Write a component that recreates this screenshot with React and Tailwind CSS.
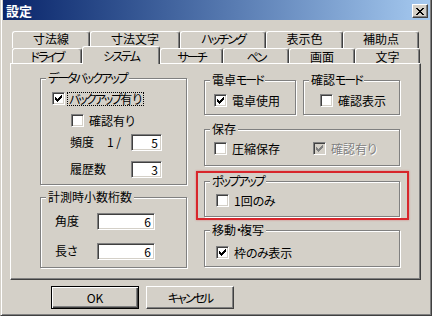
import React from 'react';

function J({ children }) {
  const s = String(children);
  const parts = [];
  let cur = '';
  let type = null;
  for (const ch of s) {
    const c = ch.codePointAt(0);
    const t = c >= 0x30a0 && c <= 0x30ff ? 'k' : c >= 0x3040 && c <= 0x309f ? 'h' : 'o';
    if (t !== type && cur) {
      parts.push([type, cur]);
      cur = '';
    }
    type = t;
    cur += ch;
  }
  if (cur) parts.push([type, cur]);
  return parts.map(([t, p], i) =>
    t === 'k' ? (
      <span key={i} className="tracking-[-2px]">{p}</span>
    ) : t === 'h' ? (
      <span key={i} className="tracking-[-0.5px]">{p}</span>
    ) : (
      <React.Fragment key={i}>{p}</React.Fragment>
    )
  );
}

function Check({ checked = false, disabled = false }) {
  return (
    <span
      className={`flex h-[13px] w-[13px] shrink-0 items-center justify-center border border-t-[#808080] border-l-[#808080] border-b-white border-r-white shadow-[inset_1px_1px_0_#404040,inset_-1px_-1px_0_#d4d0c8] ${disabled ? 'bg-[#d4d0c8]' : 'bg-white'}`}
    >
      {checked && (
        <svg width="7" height="7" viewBox="0 0 7 7" shapeRendering="crispEdges">
          <path
            d="M0 2h1v3h-1z M1 3h1v3h-1z M2 4h1v3h-1z M3 3h1v3h-1z M4 2h1v3h-1z M5 1h1v3h-1z M6 0h1v3h-1z"
            fill={disabled ? '#808080' : '#000'}
          />
        </svg>
      )}
    </span>
  );
}

function Field({ value, className = '' }) {
  return (
    <span
      className={`flex h-[17px] shrink-0 items-center justify-end border border-t-[#808080] border-l-[#808080] border-b-white border-r-white bg-white pr-[3px] leading-[13px] shadow-[inset_1px_1px_0_#404040,inset_-1px_-1px_0_#d4d0c8] ${className}`}
    >
      {value}
    </span>
  );
}

function Box({ label, className = '', children }) {
  return (
    <div className={`relative shrink-0 border border-[#808080] shadow-[inset_1px_1px_0_#fff,1px_1px_0_#fff] ${className}`}>
      <span className="absolute left-[5px] top-[-8px] whitespace-nowrap bg-[#d4d0c8] px-[2px] leading-[14px]">
        <J>{label}</J>
      </span>
      {children}
    </div>
  );
}

function CheckRow({ checked, disabled, label, className = '' }) {
  return (
    <div className={`flex h-[13px] items-center gap-[5px] ${className}`}>
      <Check checked={checked} disabled={disabled} />
      <span
        className={`whitespace-nowrap leading-[13px] ${disabled ? 'text-[#808080] [text-shadow:1px_1px_0_#fff]' : ''}`}
      >
        <J>{label}</J>
      </span>
    </div>
  );
}

const tab =
  'flex justify-center whitespace-nowrap rounded-t-[3px] border-t border-l border-r border-t-white border-l-white border-r-[#404040] bg-[#d4d0c8] shadow-[inset_-1px_0_0_#808080] leading-[13px]';

export default function App() {
  return (
    <div className="flex h-[316px] w-[432px] flex-col overflow-hidden border-l border-r border-b border-l-[#d4d0c8] border-r-[#404040] border-b-[#404040] bg-[#d4d0c8] pl-[2px] pr-[1px] font-['Noto_Sans_CJK_JP',sans-serif] text-[12px] text-black shadow-[inset_1px_0_0_#fff,inset_-1px_-1px_0_#808080] [font-feature-settings:'palt']">
      {/* title bar */}
      <div className="flex h-[20px] shrink-0 items-start justify-between bg-linear-to-r from-[#0a246a] to-[#a6caf0] pl-[3px] pr-[2px]">
        <span className="mt-[3px] text-[13px] font-bold leading-[15px] text-white">設定</span>
        <span className="mt-[4px] flex h-[14px] w-[16px] items-center justify-center border border-t-white border-l-white border-r-[#404040] border-b-[#404040] bg-[#d4d0c8] shadow-[inset_-1px_-1px_0_#808080]">
          <svg width="8" height="7" viewBox="0 0 8 7" shapeRendering="crispEdges">
            <path
              d="M0 0h2v1h-2z M6 0h2v1h-2z M1 1h2v1h-2z M5 1h2v1h-2z M2 2h4v1h-4z M3 3h2v1h-2z M2 4h4v1h-4z M1 5h2v1h-2z M5 5h2v1h-2z M0 6h2v1h-2z M6 6h2v1h-2z"
              fill="#000"
            />
          </svg>
        </span>
      </div>

      {/* body */}
      <div className="flex flex-col pl-[7px] pr-[9px]">
        {/* tabs row 1 */}
        <div className="mt-[11px] ml-[2px] flex h-[17px]">
          <div className={`${tab} items-start w-[78px]`}>寸法線</div>
          <div className={`${tab} items-start w-[90px]`}>寸法文字</div>
          <div className={`${tab} items-start w-[86px]`}><J>ハッチング</J></div>
          <div className={`${tab} items-start w-[77px]`}>表示色</div>
          <div className={`${tab} items-start w-[76px]`}>補助点</div>
        </div>
        {/* tabs row 2 */}
        <div className="ml-[2px] flex h-[15px] items-end">
          <div className={`${tab} items-center h-[15px] w-[70px]`}><J>ドライブ</J></div>
          <div className={`${tab} items-center relative z-10 -mb-px h-[18px] w-[78px]`}><J>システム</J></div>
          <div className={`${tab} items-center h-[15px] w-[63px]`}><J>サーチ</J></div>
          <div className={`${tab} items-center h-[15px] w-[66px]`}><J>ペン</J></div>
          <div className={`${tab} items-center h-[15px] w-[66px]`}>画面</div>
          <div className={`${tab} items-center h-[15px] w-[65px]`}>文字</div>
        </div>

        {/* panel */}
        <div className="flex h-[217px] border border-t-white border-l-white border-r-[#404040] border-b-[#404040] pl-[29px] pt-[14px] shadow-[inset_-1px_-1px_0_#808080]">
          {/* left column */}
          <div className="flex w-[147px] shrink-0 flex-col">
            <Box label="データバックアップ" className="h-[107px] pl-[11px] pt-[13px]">
              <div className="flex h-[13px] items-center gap-[2px]">
                <Check checked />
                <span className="whitespace-nowrap border border-dotted border-black px-[1px] leading-[12px]">
                  <J>バックアップ有り</J>
                </span>
              </div>
              <CheckRow label="確認有り" className="mt-[9px] ml-[19px]" />
              <div className="mt-[6px] ml-[18px] flex items-center">
                <span className="w-[37px] whitespace-nowrap">頻度</span>
                <span className="w-[24px] whitespace-nowrap">1 /</span>
                <Field value="5" className="w-[31px]" />
              </div>
              <div className="mt-[9px] ml-[18px] flex items-center">
                <span className="w-[61px] whitespace-nowrap">履歴数</span>
                <Field value="3" className="w-[31px]" />
              </div>
            </Box>
            <Box label="計測時小数桁数" className="mt-[12px] h-[71px] pl-[14px] pt-[14px]">
              <div className="flex items-center">
                <span className="w-[42px] whitespace-nowrap">角度</span>
                <Field value="6" className="w-[58px]" />
              </div>
              <div className="mt-[12px] flex items-center">
                <span className="w-[42px] whitespace-nowrap"><J>長さ</J></span>
                <Field value="6" className="w-[58px]" />
              </div>
            </Box>
          </div>

          {/* right column */}
          <div className="mt-[2px] ml-[17px] flex w-[196px] shrink-0 flex-col">
            <div className="flex gap-[7px]">
              <Box label="電卓モード" className="h-[35px] w-[92px] pl-[9px] pt-[13px]">
                <CheckRow checked label="電卓使用" />
              </Box>
              <Box label="確認モード" className="h-[35px] w-[97px] pl-[16px] pt-[13px]">
                <CheckRow label="確認表示" />
              </Box>
            </div>
            <Box label="保存" className="mt-[14px] h-[37px] pl-[9px] pt-[12px]">
              <div className="flex">
                <CheckRow label="圧縮保存" className="w-[99px]" />
                <CheckRow checked disabled label="確認有り" />
              </div>
            </Box>
            <div className="mt-[5px] -ml-[8px] w-[213px] border-2 border-[#d8262b] pt-[8px] pr-[7px] pb-[1px] pl-[6px] shadow-[0_0_2px_rgba(216,38,43,0.45)]">
              <Box label="ポップアップ" className="h-[36px] w-[196px] pl-[11px] pt-[12px]">
                <CheckRow label="1回のみ" />
              </Box>
            </div>
            <Box label="移動・複写" className="mt-[10px] h-[37px] pl-[11px] pt-[15px]">
              <CheckRow checked label="枠のみ表示" />
            </Box>
          </div>
        </div>

        {/* buttons */}
        <div className="mt-[6px] flex gap-[7px] pl-[41px]">
          <button className="flex h-[23px] w-[88px] items-center justify-center border border-black bg-[#d4d0c8] leading-[13px] shadow-[inset_1px_1px_0_#fff,inset_-1px_-1px_0_#404040,inset_-2px_-2px_0_#808080]">
            OK
          </button>
          <button className="flex h-[23px] w-[88px] items-center justify-center border border-t-white border-l-white border-r-[#404040] border-b-[#404040] bg-[#d4d0c8] leading-[13px] shadow-[inset_-1px_-1px_0_#808080]">
            <J>キャンセル</J>
          </button>
        </div>
      </div>
    </div>
  );
}
